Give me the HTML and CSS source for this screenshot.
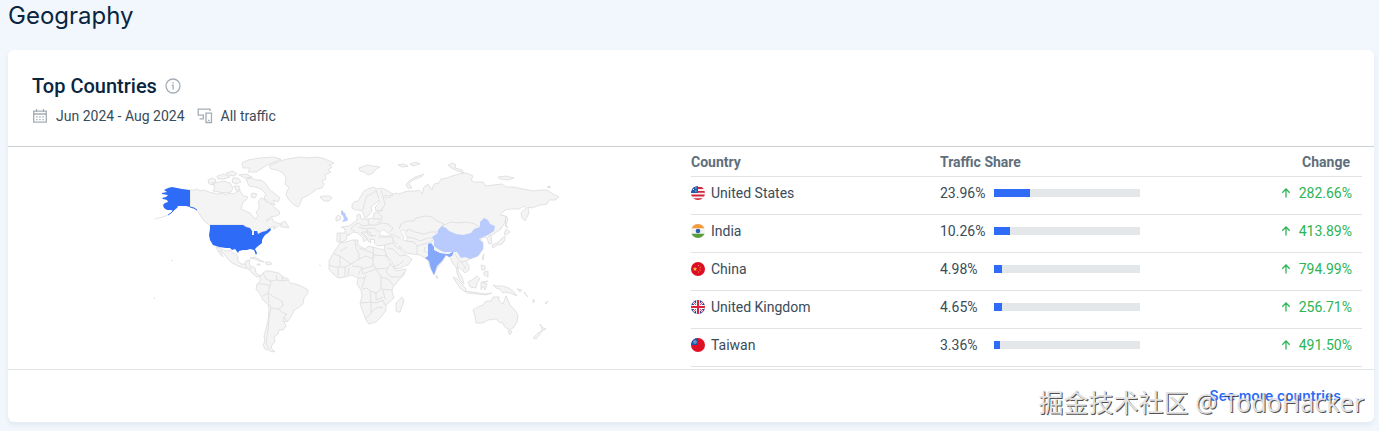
FILE: index.html
```
<!DOCTYPE html>
<html lang="en">
<head>
    <meta charset="UTF-8">
    <meta name="viewport" content="width=device-width, initial-scale=1">
    <title>Geography</title>
    <link rel="stylesheet" href="styles.css">
</head>
<body>
    <h1 class="page-title">Geography</h1>

    <section class="card">
        <header class="card-header">
            <h2 class="card-title">
                Top Countries
                <svg class="info-icon" viewBox="0 0 16 16" aria-hidden="true">
                    <circle cx="8" cy="8" r="7"/>
                    <path d="M6.6 7.3H8.1V11.6M8.1 4.2v1.5"/>
                </svg>
            </h2>
            <div class="filters">
                <span class="filter">
                    <svg class="filter-icon" viewBox="0 0 16 16" aria-hidden="true">
                        <path d="M1.7 3.2h12.6v11H1.7zM1.7 6h12.6M4.5 1v3M11.5 1v3M7 3.1h2"/>
                        <path d="M4.2 9h1.3M7.3 9h1.3M10.4 9h1.3M4.2 11.6h1.3M7.3 11.6h1.3M10.4 11.6h1.3"/>
                    </svg>
                    Jun 2024 - Aug 2024
                </span>
                <span class="filter">
                    <svg class="filter-icon" viewBox="0 0 16 16" aria-hidden="true">
                        <path d="M13 3V1.2H1.2v6H7M2.6 10.8h4.2M6.3 7.2v3.6"/>
                        <path d="M9 5.2h5.5v9.3H9zM11 12.3h1.6"/>
                    </svg>
                    All traffic
                </span>
            </div>
        </header>

        <div class="card-body">
            <div class="map">
                <svg class="world" viewBox="140 147 420 216" role="img" aria-label="World map">
                    <!-- Land -->
                    <g class="land">
                        <!-- Canada -->
                        <path d="M190 190L194 190 197 189 200 191 204 190 209 192 213 193 218 194 223 193 226 195 230 193 234 194 237 191 240 191 242 194 244 196 248 197 246 200 243 202 242 206 241 209 245 211 250 213 254 218 256 219 258 216 256 212 259 209 259 205 258 202 261 198 264 199 266 202 270 201 272 205 275 208 279 211 280 214 276 216 270 217 266 221 272 218 273 221 277 223 281 224 276 228 273 229 275 226 270 228 265 231 261 232 258 234 254 235 252 231 249 228 244 225 210 225 205 222 202 218 199 213 195 209 190 207z"/>
                        <path d="M212 183L219 182 224 181 230 183 233 188 231 192 224 193 219 192 213 191 215 187zM208 180L212 178 216 180 214 185 209 184zM217 176L224 174 230 177 224 179 218 179zM226 173L233 171 237 174 234 176 228 175zM233 178L238 178 241 182 236 184 232 182zM239 175L246 174 252 177 245 178zM234 186L239 186 240 190 236 190z"/>
                        <path d="M242 163L248 160 260 158 273 157 281 159 275 162 267 165 261 169 256 172 248 172 250 168 243 168zM246 179L252 178 256 180 261 180 266 184 269 189 274 193 280 198 278 202 273 200 275 205 268 202 264 198 266 194 261 189 255 187 249 186zM252 193L257 194 255 198 251 197z"/>
                        <path d="M281 223L285 221 287 224 289 228 284 227 281 227z"/>
                        <!-- Greenland, Iceland -->
                        <path d="M275 163L280 161 287 159 300 157 309 158 317 157 325 159 334 163 329 165 332 167 328 170 331 172 325 175 326 179 322 181 324 184 322 188 317 189 313 192 307 196 302 198 300 204 298 207 293 204 289 200 286 195 287 191 289 188 285 184 286 178 283 173 277 170 271 169 269 166z"/>
                        <path d="M320 197L324 196 330 196 332 198 329 201 324 201z"/>
                        <!-- Mexico, Central America, Caribbean -->
                        <path d="M216 247L220 248 226 251 230 250 233 253 236 254 238 257 238 261 241 264 245 264 246 261 250 260 249 264 251 266 255 268 256 273 260 276 257 277 252 273 249 269 244 268 238 266 232 263 228 259 225 255 220 250 223 257 219 253z"/>
                        <path d="M250 258L255 257 260 260 264 262 259 261 255 259zM265 262L270 262 272 264 267 265zM257 264H260V265H257z"/>
                        <!-- South America -->
                        <path d="M260 276L263 273 266 271 270 271 274 272 279 273 283 277 288 279 290 283 296 284 303 287 308 290 308 293 304 298 303 304 298 308 294 310 292 315 288 321 284 322 286 326 283 330 279 330 278 334 274 337 275 341 272 345 271 348 275 352 270 351 265 349 263 345 265 341 264 336 266 329 268 321 269 310 268 304 263 300 260 294 256 289 257 284 260 281z"/>
                        <!-- Europe and Asia -->
                        <path d="M352 205L354 202 358 201 361 196 364 191 368 189 373 187 377 189 382 188 388 191 393 194 389 196 385 195 386 198 390 197 394 194 396 193 399 194 404 192 410 191 416 191 419 190 422 194 424 187 428 184 432 190 434 184 439 183 441 179 447 178 452 176 459 174 466 173 473 176 471 180 474 182 483 182 486 186 493 185 502 184 506 187 513 187 523 189 533 191 540 190 547 190 553 194 559 197 555 200 549 200 547 204 540 205 532 208 528 207 529 213 525 221 522 218 521 213 526 208 524 206 519 209 511 209 505 210 500 215 506 216 505 222 501 229 495 233 491 236 492 243 489 244 487 238 484 237 480 240 483 242 483 249 478 256 470 259 466 261 469 266 469 270 465 273 462 270 459 267 458 271 462 277 464 284 460 280 457 273 456 267 453 264 450 257 446 255 442 262 437 268 434 275 430 267 428 260 425 258 420 255 412 254 406 253 403 249 399 246 402 251 406 255 412 259 409 264 401 268 395 269 392 262 387 256 384 250 385 245 378 246 374 243 375 240 370 239 371 243 368 241 366 236 361 232 365 237 367 239 364 242 363 238 358 233 354 232 350 234 347 236 346 240 342 242 337 242 337 233 345 233 345 229 341 227 349 226 353 223 357 220 357 215 360 214 361 219 368 219 373 218 374 213 378 212 383 210 376 211 375 207 379 203 379 200 376 203 371 207 372 211 368 216 365 218 362 211 359 210 355 210 352 208z"/>
                        <path d="M336 217L338 215 341 217 340 220 336 221z"/>
                        <!-- Arctic islands -->
                        <path d="M406 185L409 181 415 177 424 174 421 177 413 180 409 184 412 188 408 188zM359 168L367 165 380 167 376 169 373 173 368 175 364 172 360 171zM398 165L403 164 408 166 402 167zM410 164L416 162 420 164 413 166zM448 165L453 163 456 165 455 168 462 170 464 173 457 171 450 167zM498 177L506 176 514 178 508 180 500 179zM547 187L550 186 550 188z"/>
                        <!-- Africa -->
                        <path d="M340 243L346 242 352 240 358 240 358 245 365 249 369 246 376 248 385 250 386 255 389 261 393 267 396 271 406 269 404 275 398 281 393 287 392 291 394 298 386 305 386 310 382 316 376 322 369 324 366 320 363 312 360 304 362 296 361 290 357 284 358 278 352 275 345 277 338 278 333 274 329 269 329 261 334 252z"/>
                        <path d="M396 310L396 303 402 297 404 301 400 312 397 312zM436 275L438 277 437 279z"/>
                        <!-- South-east Asia, Japan -->
                        <path d="M453 277L457 279 462 284 466 289 465 292 460 288 456 282zM465 291L472 292 479 293 485 294 492 293 486 295 478 294 467 293zM468 282L472 280 477 276 480 279 477 283 476 288 470 287zM481 282L488 281 483 283 487 284 485 290 483 286 481 290zM493 285L497 286 502 286 509 288 514 292 517 296 510 293 505 292 503 293 500 289 496 288zM481 265L485 266 485 270 482 270zM484 272L488 271 488 277 484 275zM482 257L484 254 483 260z"/>
                        <path d="M506 229L510 232 506 235 504 234zM505 236L505 240 502 244 497 245 493 248 492 245 499 242 501 239zM506 216L508 219 506 225 508 228 505 226zM517 289L522 290 520 292zM524 292L528 297 525 294zM533 299L535 301 533 303zM545 303L548 301 546 304z"/>
                        <!-- Oceania -->
                        <path d="M473 310L478 307 483 305 486 301 491 301 493 297 499 297 499 301 503 304 506 296 508 300 510 305 514 309 518 315 517 322 513 328 509 330 505 327 502 322 500 323 496 319 488 320 483 323 476 323 475 316zM508 331L512 331 510 335zM540 324L543 328 546 329 541 332 542 329zM539 332L541 333 536 339 533 338z"/>
                    </g>
                    <!-- Seas inside the land outlines -->
                    <path class="sea" d="M380 231L384 230 388 233 392 235 386 236 380 235zM400 231L405 230 405 233 407 237 407 241 403 240 404 236z"/>
                    <!-- Borders -->
                    <path class="border" d="M376 190L373 193 367 196 364 204 363 210M376 190L379 199M381 190L383 196 385 205 381 210M378 213L382 216 381 221 377 223M368 219L369 225 363 226 358 223 353 226 351 229 355 232M369 225L376 225 382 223 388 224 393 228 390 232M358 227L366 229 374 228 379 232M363 232L370 232 372 237M367 229L368 235 376 236M373 219L380 219M346 234L350 235M340 233L340 242M378 237L384 237 393 237 393 243 385 245M392 234L400 238M393 240L397 244M399 229L401 224 407 221 414 221 416 218 426 216 432 217 437 221 444 224 441 227 438 232 431 232 424 234 415 232 408 229 407 232M407 237L413 238 420 241 428 238 432 238M406 241L414 242 417 246 417 254M417 246L424 244 430 242 433 240M428 253L424 251 425 247M393 243L396 247 400 249M387 248L393 249 400 256 406 255M393 267L400 264 404 260M442 226L451 222 459 223 466 222 475 224 480 227M488 237L491 235M455 254L458 259 461 262 466 261M458 262L457 269M461 262L466 268 463 269M440 250L446 252"/>
                    <path class="border" d="M355 240L356 248 359 254 359 259 351 264 340 256 334 254M340 251L347 247M359 248L373 253 373 259M373 247L374 258M374 255L387 256M359 259L366 256 373 259 373 266 362 269M351 264L345 267 335 267 329 265M340 256L340 266M338 267L338 277M345 267L345 276M349 268L348 275M352 266L362 267 358 275M373 264L376 269 388 268 391 263M388 268L386 272 391 277 400 277 404 272M362 269L363 274 376 269M376 269L381 277 388 279 393 285M358 278L365 278 366 275M365 278L362 288M381 277L381 289 392 290M381 289L376 293 370 291 367 288 362 289M370 291L371 302 361 303M376 293L376 300 383 297M371 302L376 303 383 300 385 305M371 302L371 314 366 318M371 312L378 307 383 308M383 290L385 299"/>
                    <path class="border" d="M263 273L266 279 271 281 270 286 264 284 258 284M271 281L277 280 276 275M277 280L283 281 288 280M282 276L283 281M270 286L268 293 263 296M268 293L274 297 282 301 283 306 278 309 271 308 269 304M268 293L269 303M278 309L283 313 287 314 284 317 287 322M271 308L269 318 268 330 266 343 269 349M284 317L283 322M245 264L247 268M251 267L249 270"/>
                    <!-- Countries with traffic -->
                    <path class="share-high" d="M164 190L168 188 172 187 177 188 182 189 190 190 190 207 186 206 182 206 178 206 177 208 173 211 171 210 167 210 164 208 163 205 165 203 168 202 167 200 163 199 162 198 166 197 168 195 162 194 162 193 167 192z"/>
                    <path class="coast-high" d="M175 209L171 213 168 215M190 207L194 208 197 210"/>
                    <path class="share-high" d="M210 225L243 225 246 227 250 228 252 231 252 235 254 235 254 231 257 231 258 234 262 232 266 231 270 228 271 230 268 233 265 235 263 238 262 240 262 243 257 247 255 249 257 253 256 255 254 250 250 249 247 250 243 250 239 251 238 253 235 249 232 250 230 248 226 248 219 247 213 245 210 240 209 235 210 229z"/>
                    <path class="islands" d="M168 215L163 217 158 218 155 219M171 260L173 261M154 297L155 299M319 265L321 266"/>
                    <path class="share-mid" d="M428 244L431 243 434 247 434 250 440 253 446 254 449 254 454 251 452 256 449 257 446 255 442 261 437 266 434 275 431 269 429 261 425 258 428 256 428 252z"/>
                    <path class="share-low" d="M432 237L438 233 438 230 442 226 446 228 449 231 456 234 463 235 471 233 474 229 480 227 480 222 484 218 488 220 490 224 495 226 494 231 488 235 483 237 479 239 483 243 483 249 478 256 470 259 465 257 461 258 457 252 450 252 444 252 438 249 434 246 434 241z"/>
                    <path class="share-low" d="M341 211L343 210 343 212 345 213 346 216 348 219 347 221 342 222 344 219 343 216 341 214z"/>
                </svg>
            </div>

            <div class="table-wrap">
                <table class="countries">
                    <thead>
                        <tr>
                            <th class="col-country" scope="col">Country</th>
                            <th class="col-share" scope="col">Traffic Share</th>
                            <th class="col-change" scope="col">Change</th>
                        </tr>
                    </thead>
                    <tbody>
                        <tr>
                            <td>
                                <div class="country">
                                    <svg class="flag" viewBox="0 0 14 14" aria-hidden="true">
                                        <path fill="#f5f5f5" d="M0 0h14v14H0z"/>
                                        <path fill="#d9223b" d="M0 1h14v2H0zM0 5h14v1.8H0zM0 8.6h14v1.8H0zM0 12.2h14V14H0z"/>
                                        <path fill="#1f5aa8" d="M0 0h7v7H0z"/>
                                        <path fill="#fff" d="M2 3h1v1H2zM4.4 1.5h1v1h-1zM4.4 4.4h1v1h-1z"/>
                                    </svg>
                                    United States
                                </div>
                            </td>
                            <td>
                                <div class="share">
                                    <span class="percent">23.96%</span>
                                    <span class="bar"><span class="fill" style="width: 24.6%"></span></span>
                                </div>
                            </td>
                            <td class="change"><svg class="arrow" viewBox="0 0 10 10" aria-hidden="true"><path d="M5 9.5V1.2M1.3 4.7L5 1l3.7 3.7"/></svg>282.66%</td>
                        </tr>
                        <tr>
                            <td>
                                <div class="country">
                                    <svg class="flag" viewBox="0 0 14 14" aria-hidden="true">
                                        <path fill="#f3f4f5" d="M0 0h14v14H0z"/>
                                        <path fill="#f79a3e" d="M0 0h14v4.3H0z"/>
                                        <path fill="#5a9e3f" d="M0 9.7h14V14H0z"/>
                                        <circle cx="7" cy="7" r="2.3" fill="#2c62ae"/>
                                    </svg>
                                    India
                                </div>
                            </td>
                            <td>
                                <div class="share">
                                    <span class="percent">10.26%</span>
                                    <span class="bar"><span class="fill" style="width: 11%"></span></span>
                                </div>
                            </td>
                            <td class="change"><svg class="arrow" viewBox="0 0 10 10" aria-hidden="true"><path d="M5 9.5V1.2M1.3 4.7L5 1l3.7 3.7"/></svg>413.89%</td>
                        </tr>
                        <tr>
                            <td>
                                <div class="country">
                                    <svg class="flag" viewBox="0 0 14 14" aria-hidden="true">
                                        <path fill="#dc0d24" d="M0 0h14v14H0z"/>
                                        <path fill="#fbc83a" d="M4 4.8l.6 1.5h1.6L5 7.3l.4 1.6L4 8l-1.4.9L3 7.3l-1.2-1h1.6z"/>
                                        <path fill="#f5a742" d="M7 3h1v1H7zM8.7 4.8h1v1h-1zM8.7 7.5h1v1h-1zM7 9.4h1v1H7z"/>
                                    </svg>
                                    China
                                </div>
                            </td>
                            <td>
                                <div class="share">
                                    <span class="percent">4.98%</span>
                                    <span class="bar"><span class="fill" style="width: 5.5%"></span></span>
                                </div>
                            </td>
                            <td class="change"><svg class="arrow" viewBox="0 0 10 10" aria-hidden="true"><path d="M5 9.5V1.2M1.3 4.7L5 1l3.7 3.7"/></svg>794.99%</td>
                        </tr>
                        <tr>
                            <td>
                                <div class="country">
                                    <svg class="flag" viewBox="0 0 14 14" aria-hidden="true">
                                        <path fill="#29418f" d="M0 0h14v14H0z"/>
                                        <path stroke="#fff" stroke-width="2" d="M0 0l14 14M14 0L0 14"/>
                                        <path stroke="#d9223b" stroke-width="0.8" d="M0 0l14 14M14 0L0 14"/>
                                        <path stroke="#fff" stroke-width="3.8" d="M7 0v14M0 7h14"/>
                                        <path stroke="#d9223b" stroke-width="2" d="M7 0v14M0 7h14"/>
                                    </svg>
                                    United Kingdom
                                </div>
                            </td>
                            <td>
                                <div class="share">
                                    <span class="percent">4.65%</span>
                                    <span class="bar"><span class="fill" style="width: 5.5%"></span></span>
                                </div>
                            </td>
                            <td class="change"><svg class="arrow" viewBox="0 0 10 10" aria-hidden="true"><path d="M5 9.5V1.2M1.3 4.7L5 1l3.7 3.7"/></svg>256.71%</td>
                        </tr>
                        <tr>
                            <td>
                                <div class="country">
                                    <svg class="flag" viewBox="0 0 14 14" aria-hidden="true">
                                        <path fill="#e00f26" d="M0 0h14v14H0z"/>
                                        <path fill="#1c56a5" d="M0 0h7v7H0z"/>
                                        <circle cx="4" cy="4" r="1.7" fill="#86b4df"/>
                                        <circle cx="4" cy="4" r="0.8" fill="#2d6db5"/>
                                    </svg>
                                    Taiwan
                                </div>
                            </td>
                            <td>
                                <div class="share">
                                    <span class="percent">3.36%</span>
                                    <span class="bar"><span class="fill" style="width: 4.1%"></span></span>
                                </div>
                            </td>
                            <td class="change"><svg class="arrow" viewBox="0 0 10 10" aria-hidden="true"><path d="M5 9.5V1.2M1.3 4.7L5 1l3.7 3.7"/></svg>491.50%</td>
                        </tr>
                    </tbody>
                </table>
            </div>
        </div>

        <footer class="card-footer">
            <a class="more-link" href="#">See more countries</a>
            <span class="watermark">掘金技术社区 @ TodoHacker</span>
        </footer>
    </section>
</body>
</html>
```
FILE: styles.css
```
* {
    box-sizing: border-box;
}

body {
    margin: 0;
    padding: 0 5px 9px 8px;
    background-color: #f2f7fd;
    color: #3a4b59;
    font-family: Roboto, "Liberation Sans", sans-serif;
    font-size: 14px;
    line-height: 20px;
}

.page-title {
    margin: 0 0 18px;
    color: #092540;
    font-family: "Inter", "Open Sans", sans-serif;
    font-size: 24px;
    font-weight: 400;
    line-height: 32px;
}

/* Card */
.card {
    background-color: #fff;
    border-radius: 6px;
    box-shadow: 0 3px 5px rgba(42, 62, 82, 0.08);
}

.card-header {
    padding: 23px 24px 20px;
    border-bottom: 1px solid #cbd0d4;
}

.card-title {
    display: flex;
    align-items: center;
    gap: 8px;
    margin: 0 0 7px;
    color: #092540;
    font-size: 20px;
    font-weight: 500;
    line-height: 26px;
}

.info-icon,
.filter-icon {
    width: 16px;
    height: 16px;
    fill: none;
    stroke: #a4adb5;
    stroke-width: 1.3;
}

.filters {
    display: flex;
    gap: 12px;
}

.filter {
    display: flex;
    align-items: center;
    gap: 8px;
}

.card-body {
    display: grid;
    grid-template-columns: 1fr 1fr;
    padding-bottom: 2px;
    border-bottom: 1px solid #e3e6e8;
}

/* World map */
.map {
    display: flex;
    justify-content: center;
    align-items: flex-start;
}

.world {
    width: 420px;
    max-width: 100%;
}

.land {
    fill: #f4f4f4;
    stroke: #dcdcdc;
    stroke-width: 0.8;
    stroke-linejoin: round;
}

.border,
.islands {
    fill: none;
    stroke: #dcdcdc;
    stroke-width: 0.8;
}

.sea {
    fill: #fff;
    stroke: #dcdcdc;
    stroke-width: 0.6;
}

.share-high {
    fill: #2e6bf6;
}

.coast-high {
    fill: none;
    stroke: #2e6bf6;
}

.share-mid {
    fill: #86a8fb;
}

.share-low {
    fill: #b9cbfc;
}

/* Countries table */
.table-wrap {
    padding-right: 12px;
}

.countries {
    width: 100%;
    border-collapse: separate;
    border-spacing: 0;
    table-layout: fixed;
}

.countries th {
    padding: 5px 0 4px;
    border-bottom: 1px solid #e0e3e5;
    color: #5f6f7c;
    font-weight: 700;
    text-align: left;
}

.countries td {
    height: 38px;
    padding: 0 0 6px;
    border-bottom: 1px solid #e0e3e5;
}

.col-country {
    width: 249px;
}

.col-share {
    width: 250px;
}

.countries .col-change {
    padding-right: 12px;
    text-align: right;
}

.country {
    display: flex;
    align-items: center;
    gap: 6px;
}

.flag {
    width: 14px;
    height: 14px;
    border-radius: 50%;
}

.share {
    display: flex;
    align-items: center;
}

.percent {
    width: 54px;
}

.bar {
    width: 146px;
    height: 8px;
    background-color: #e4e7e9;
}

.fill {
    display: block;
    height: 100%;
    background-color: #2e6bf6;
}

.countries .change {
    padding-right: 10px;
    color: #2db454;
    text-align: right;
}

.arrow {
    width: 10px;
    height: 10px;
    margin-right: 8px;
    fill: none;
    stroke: #2db454;
    stroke-width: 1.3;
}

/* Footer */
.card-footer {
    position: relative;
    display: flex;
    justify-content: flex-end;
    align-items: center;
    height: 52px;
    padding-right: 33px;
}

.more-link {
    color: #2e6bf6;
    font-family: "Inter", "Open Sans", sans-serif;
    font-size: 14px;
    font-weight: 600;
    text-decoration: none;
}

.watermark {
    position: absolute;
    right: 10px;
    bottom: 2px;
    color: #dedede;
    font-family: "Noto Sans", "Noto Sans CJK SC", sans-serif;
    font-size: 25px;
    line-height: 36px;
    text-shadow: 1px 1px 0 #333;
    white-space: nowrap;
    opacity: 0.85;
    pointer-events: none;
}
```
